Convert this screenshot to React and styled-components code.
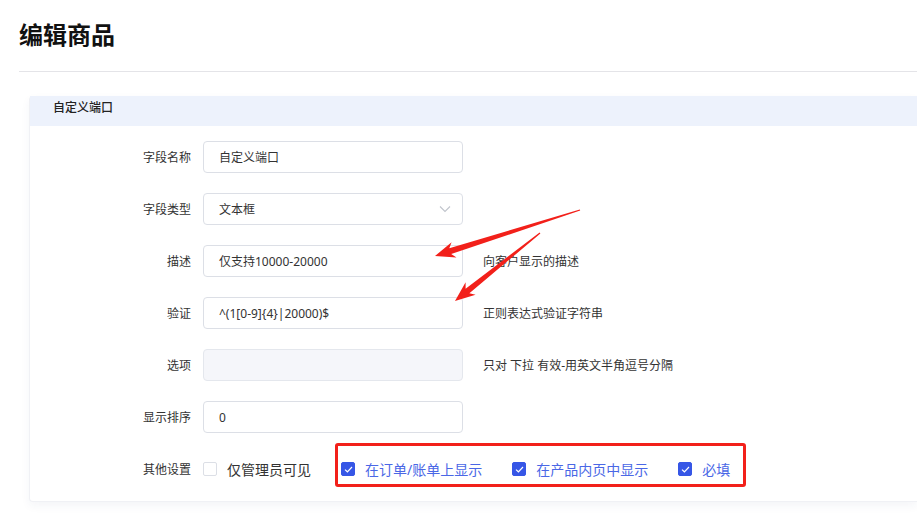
import React from "react";
import styled, { createGlobalStyle } from "styled-components";

const GlobalStyle = createGlobalStyle`
  body {
    margin: 0;
    background: #fff;
    font-family: "Noto Sans", "Noto Sans CJK SC", sans-serif;
    color: #333;
  }
`;

const Page = styled.div`
  position: relative;
  width: 917px;
  height: 516px;
  overflow: hidden;
`;

const Header = styled.div`
  margin-left: 19px;
  padding: 18px 0 19px;
  border-bottom: 1px solid #e4e4e8;
`;

const Title = styled.h1`
  margin: 0;
  font-size: 24px;
  line-height: 34px;
  font-weight: 700;
  color: #111;
`;

const Card = styled.div`
  margin: 24px 0 0 29px;
  background: #fff;
  border: 1px solid #f0f1f5;
  border-top: none;
  border-right: none;
  border-radius: 4px 0 0 4px;
  box-shadow: 0 4px 10px rgba(40, 50, 120, 0.05);
`;

const CardHead = styled.div`
  height: 30px;
  box-sizing: border-box;
  padding: 3px 0 0 23px;
  line-height: 18px;
  background: #edf2fc;
  font-size: 12px;
  font-weight: 500;
  color: #222;
`;

const Form = styled.div`
  display: flex;
  flex-direction: column;
  gap: 20px;
  padding: 15px 0 16px;
`;

const Row = styled.div`
  display: flex;
  align-items: center;
  height: 32px;
`;

const Label = styled.div`
  width: 161px;
  padding-right: 12px;
  text-align: right;
  font-size: 12px;
  color: #333;
`;

const Field = styled.div`
  position: relative;
  box-sizing: border-box;
  width: 260px;
  height: 32px;
  padding: 0 15px;
  display: flex;
  align-items: center;
  border: 1px solid ${(p) => (p.disabled ? "#e4e7ed" : "#dcdfe6")};
  border-radius: 4px;
  background: ${(p) => (p.disabled ? "#f5f6fa" : "#fff")};
  font-size: 12px;
  color: #333;
`;

const Chevron = styled.svg`
  position: absolute;
  right: 11px;
  top: 11px;
`;

const Hint = styled.div`
  margin-left: 20px;
  font-size: 12px;
  color: #333;
`;

const Checks = styled.div`
  display: flex;
  align-items: center;
  gap: 30px;
`;

const CheckItem = styled.label`
  display: flex;
  align-items: center;
  gap: 10px;
  font-size: 14px;
  color: ${(p) => (p.checked ? "#4a67e6" : "#333")};
`;

const Box = styled.span`
  box-sizing: border-box;
  width: 14px;
  height: 14px;
  border-radius: 2px;
  display: flex;
  align-items: center;
  justify-content: center;
  border: 1px solid ${(p) => (p.checked ? "#3656e6" : "#dcdfe6")};
  background: ${(p) => (p.checked ? "#3656e6" : "#fff")};
`;

const Highlight = styled.div`
  position: absolute;
  left: 335px;
  top: 443px;
  width: 411px;
  height: 44px;
  box-sizing: border-box;
  border: 3px solid #f2201a;
  border-radius: 3px;
  pointer-events: none;
`;

const Overlay = styled.svg`
  position: absolute;
  left: 0;
  top: 0;
  pointer-events: none;
`;

function arrowPoints(tx, ty, hx, hy) {
  const dx = hx - tx;
  const dy = hy - ty;
  const len = Math.hypot(dx, dy);
  const ux = dx / len;
  const uy = dy / len;
  const nx = -uy;
  const ny = ux;
  const headLen = 20;
  const headW = 8;
  const neckW = 3;
  const tailW = 0.6;
  const bx = hx - ux * headLen;
  const by = hy - uy * headLen;
  const nbx = bx + ux * 4;
  const nby = by + uy * 4;
  const pts = [
    [tx + nx * tailW, ty + ny * tailW],
    [nbx + nx * neckW, nby + ny * neckW],
    [bx + nx * headW, by + ny * headW],
    [hx, hy],
    [bx - nx * headW, by - ny * headW],
    [nbx - nx * neckW, nby - ny * neckW],
    [tx - nx * tailW, ty - ny * tailW],
  ];
  return pts.map((p) => p.map((v) => v.toFixed(1)).join(",")).join(" ");
}

const rows = [
  { label: "字段名称", value: "自定义端口" },
  { label: "字段类型", value: "文本框", select: true },
  { label: "描述", value: "仅支持10000-20000", hint: "向客户显示的描述" },
  { label: "验证", value: "^(1[0-9]{4}|20000)$", hint: "正则表达式验证字符串" },
  { label: "选项", value: "", disabled: true, hint: "只对 下拉 有效-用英文半角逗号分隔" },
  { label: "显示排序", value: "0" },
];

const options = [
  { text: "仅管理员可见", checked: false },
  { text: "在订单/账单上显示", checked: true },
  { text: "在产品内页中显示", checked: true },
  { text: "必填", checked: true },
];

export default function App() {
  return (
    <Page>
      <GlobalStyle />
      <Header>
        <Title>编辑商品</Title>
      </Header>
      <Card>
        <CardHead>自定义端口</CardHead>
        <Form>
          {rows.map((r) => (
            <Row key={r.label}>
              <Label>{r.label}</Label>
              <Field disabled={r.disabled}>
                {r.value}
                {r.select && (
                  <Chevron width="12" height="8" viewBox="0 0 12 8">
                    <path d="M1 1.5 L6 6.5 L11 1.5" fill="none" stroke="#c0c4cc" strokeWidth="1.1" />
                  </Chevron>
                )}
              </Field>
              {r.hint && <Hint>{r.hint}</Hint>}
            </Row>
          ))}
          <Row>
            <Label>其他设置</Label>
            <Checks>
              {options.map((o) => (
                <CheckItem key={o.text} checked={o.checked}>
                  <Box checked={o.checked}>
                    {o.checked && (
                      <svg width="9" height="7" viewBox="0 0 9 7">
                        <path d="M1 3.6 L3.4 5.8 L8 1" fill="none" stroke="#fff" strokeWidth="1.2" />
                      </svg>
                    )}
                  </Box>
                  {o.text}
                </CheckItem>
              ))}
            </Checks>
          </Row>
        </Form>
      </Card>
      <Highlight />
      <Overlay width="917" height="516" viewBox="0 0 917 516">
        <polygon points={arrowPoints(580, 210, 435, 256)} fill="#f2201a" />
        <polygon points={arrowPoints(540, 233, 455, 301)} fill="#f2201a" />
      </Overlay>
    </Page>
  );
}
